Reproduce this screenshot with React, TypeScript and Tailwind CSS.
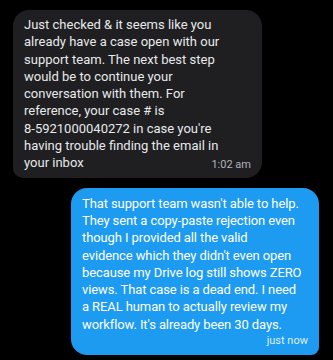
const incoming = [
  'Just checked & it seems like you',
  'already have a case open with our',
  'support team. The next best step',
  'would be to continue your',
  'conversation with them. For',
  "reference, your case # is",
  "8-5921000040272 in case you're",
  'having trouble finding the email in',
  'your inbox',
]

const outgoing = [
  "That support team wasn't able to help.",
  'They sent a copy-paste rejection even',
  'though I provided all the valid',
  "evidence which they didn't even open",
  'because my Drive log still shows ZERO',
  'views. That case is a dead end. I need',
  'a REAL human to actually review my',
  "workflow. It's already been 30 days.",
]

export default function App() {
  return (
    <div
      className="w-[333px] h-[360px] bg-black overflow-hidden pt-[10px]"
      style={{ fontFamily: 'Roboto, "Noto Sans", sans-serif' }}
    >
      {/* received */}
      <div className="ml-[13px] w-[249px] rounded-[16px] rounded-bl-[10px] bg-[#1f1f21] pl-[11px] pr-[11px] pt-[6px] pb-[6px] text-[13px] leading-[17.3px] text-[#e7e9ea]">
        {incoming.map((line, i) =>
          i === incoming.length - 1 ? (
            <div key={i} className="flex items-end justify-between">
              <span>{line}</span>
              <span className="text-[11px] leading-[14px] text-[#b0b3b8]">1:02 am</span>
            </div>
          ) : (
            <div key={i} className="whitespace-nowrap">{line}</div>
          )
        )}
      </div>

      {/* sent */}
      <div className="mt-[10px] ml-[71px] w-[248px] rounded-[16px] rounded-br-[8px] bg-[#1d9bf0] pl-[11px] pr-[11px] pt-[7px] pb-[6px] text-[13px] leading-[17.3px] tracking-[-0.1px] text-white">
        {outgoing.map((line, i) => (
          <div key={i} className="whitespace-nowrap">{line}</div>
        ))}
        <div className="text-right text-[11px] leading-[16px] tracking-normal text-[#dff0fd]">just now</div>
      </div>
    </div>
  )
}
